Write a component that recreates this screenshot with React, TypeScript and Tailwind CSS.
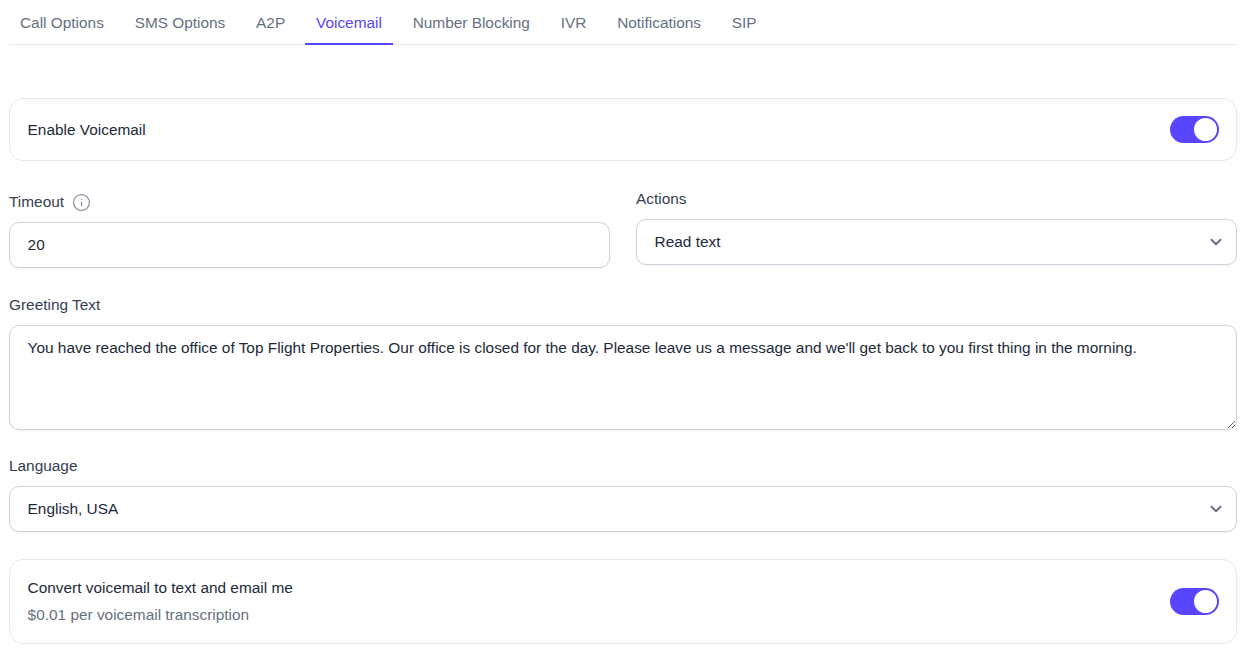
import { ChevronDown, Info } from "lucide-react";

const tabs = ["Call Options", "SMS Options", "A2P", "Voicemail", "Number Blocking", "IVR", "Notifications", "SIP"];

const Toggle = () => (
  <button type="button" role="switch" aria-checked="true" className="flex h-[27px] w-[49px] shrink-0 items-center justify-end rounded-full bg-[#5845ff] p-[2px]">
    <span className="block h-[23px] w-[23px] rounded-full bg-white" />
  </button>
);

const Select = ({ options }: { options: string[] }) => (
  <div className="relative">
    <select className="block h-[46px] w-full appearance-none rounded-[10px] border border-[#d0d0de] bg-white px-[17.6px] text-[15.4px] text-[#1d2939] shadow-[0_1px_2px_rgba(16,24,40,0.05)] outline-none">
      {options.map((o) => (
        <option key={o}>{o}</option>
      ))}
    </select>
    <ChevronDown size={18} strokeWidth={2.6} className="pointer-events-none absolute right-[12.5px] top-[13.5px] text-[#667085]" />
  </div>
);

export default function App() {
  return (
    <div className="min-h-[655px] bg-white pl-[9px] pr-[15px] font-['Liberation_Sans',Arial,sans-serif] text-[15.4px] text-[#1d2939]">
      <div className="flex h-[45px] gap-[8.8px] border-b border-[#e8e8ef]">
        {tabs.map((t) => (
          <button
            key={t}
            type="button"
            className={
              t === "Voicemail"
                ? "-mb-px h-[45px] border-b-2 border-[#5845ff] px-[11px] pt-[2px] text-[15.4px] text-[#5845ff]"
                : "-mb-px h-[45px] border-b-2 border-transparent px-[11px] pt-[2px] text-[15.4px] text-[#667085]"
            }
          >
            {t}
          </button>
        ))}
      </div>

      <div className="mt-[53px] flex h-[63px] items-center justify-between rounded-[14px] border border-[#e8e8ef] pl-[17.6px] pr-[17px]">
        <span>Enable Voicemail</span>
        <Toggle />
      </div>

      <div className="mt-[28px] grid grid-cols-2 items-start gap-[26px]">
        <div>
          <div className="mb-[10px] mt-[3px] flex h-[20px] items-center gap-[8px] text-[#344054]">
            <label>Timeout</label>
            <Info size={19} strokeWidth={1.6} className="text-[#8a8fa3]" />
          </div>
          <input
            defaultValue="20"
            className="block h-[46px] w-full rounded-[10px] border border-[#d0d0de] px-[17.6px] text-[15.4px] text-[#1d2939] shadow-[0_1px_2px_rgba(16,24,40,0.05)] outline-none"
          />
        </div>
        <div>
          <label className="mb-[10px] block h-[20px] leading-[20px] text-[#344054]">Actions</label>
          <Select options={["Read text"]} />
        </div>
      </div>

      <label className="mt-[27px] mb-[10px] block h-[20px] leading-[20px] text-[#344054]">Greeting Text</label>
      <textarea
        defaultValue="You have reached the office of Top Flight Properties. Our office is closed for the day. Please leave us a message and we'll get back to you first thing in the morning."
        className="block h-[105px] w-full resize-y rounded-[10px] border border-[#d0d0de] px-[17.6px] py-[12px] text-[15.4px] leading-[20px] text-[#1d2939] shadow-[0_1px_2px_rgba(16,24,40,0.05)] outline-none"
      />

      <label className="mt-[26px] mb-[10px] block h-[20px] leading-[20px] text-[#344054]">Language</label>
      <Select options={["English, USA"]} />

      <div className="mt-[27px] flex h-[85px] items-center justify-between rounded-[14px] border border-[#e8e8ef] pl-[17.6px] pr-[17px]">
        <div>
          <div className="leading-[20px]">Convert voicemail to text and email me</div>
          <div className="mt-[7px] leading-[20px] text-[#667085]">$0.01 per voicemail transcription</div>
        </div>
        <Toggle />
      </div>
    </div>
  );
}
